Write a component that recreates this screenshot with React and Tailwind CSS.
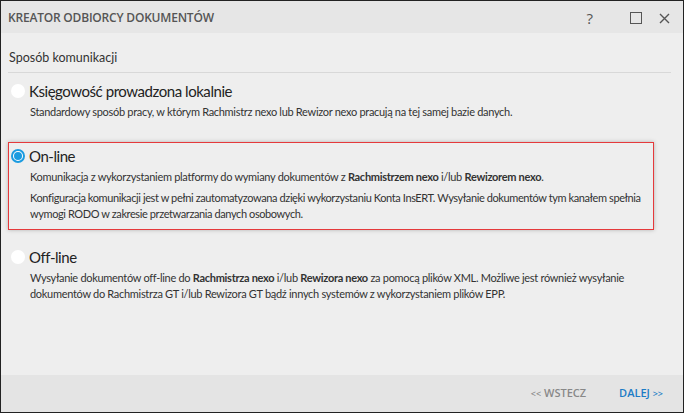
const font = { fontFamily: 'Lato, "Noto Sans", sans-serif' };
const titleFont = { fontFamily: '"Open Sans", "Noto Sans", sans-serif' };

function Radio({ checked }) {
  if (checked) {
    return (
      <span className="w-[14px] h-[14px] rounded-full border-[2px] border-[#1a9be0] bg-white flex items-center justify-center shrink-0">
        <span className="w-[8px] h-[8px] rounded-full bg-[#1a9be0]" />
      </span>
    );
  }
  return <span className="w-[14px] h-[14px] rounded-full bg-white shrink-0" />;
}

function Option({ label, checked, children }) {
  return (
    <div>
      <div className="flex items-center gap-[4px] h-[25px]">
        <Radio checked={checked} />
        <span className="text-[15px] tracking-[-0.45px] text-[#222] leading-none">{label}</span>
      </div>
      <div className="pl-[19px] text-[11px] tracking-[-0.3px] leading-[16px] text-[#333]">{children}</div>
    </div>
  );
}

export default function App() {
  return (
    <div style={font} className="w-[684px] h-[413px] border border-[#222] bg-[#eeeeee] flex flex-col overflow-hidden">
      {/* TITLE BAR */}
      <div className="h-[32px] bg-[#e6e6e6] flex items-center justify-between pl-[7px] pr-[13px] pt-[2px] shrink-0">
        <span style={titleFont} className="text-[12px] font-semibold text-[#555] tracking-[-0.2px]">KREATOR ODBIORCY DOKUMENTÓW</span>
        <div className="flex items-center text-[#555]">
          <span style={titleFont} className="text-[15px] leading-none mr-[37px]">?</span>
          <span className="w-[12px] h-[12px] border-[1.5px] border-[#555] mr-[17px]" />
          <svg width="11" height="11" viewBox="0 0 11 11">
            <path d="M1 1 L10 10 M10 1 L1 10" stroke="#555" strokeWidth="1.4" />
          </svg>
        </div>
      </div>

      {/* CONTENT */}
      <div className="flex-1 px-[7px] pt-[16px]">
        <div className="text-[12.5px] text-[#333] pb-[4px] border-b border-[#d8d8d8] mr-[5px] pl-[1px]">Sposób komunikacji</div>

        <div className="pt-[6px] pl-[3px]">
          <Option label="Księgowość prowadzona lokalnie">
            Standardowy sposób pracy, w którym Rachmistrz nexo lub Rewizor nexo pracują na tej samej bazie danych.
          </Option>
        </div>

        <div className="mt-[22px] mr-[22px] border border-[#e5393b] shadow-[0_0_4px_rgba(0,0,0,0.25)] pl-[2px] pt-[1px] pb-[7px]">
          <Option label="On-line" checked>
            <p>
              Komunikacja z wykorzystaniem platformy do wymiany dokumentów z <b>Rachmistrzem nexo</b> i/lub <b>Rewizorem nexo</b>.
            </p>
            <p className="mt-[5px] tracking-[-0.4px]">
              Konfiguracja komunikacji jest w pełni zautomatyzowana dzięki wykorzystaniu Konta InsERT. Wysyłanie dokumentów tym kanałem spełnia wymogi RODO w zakresie przetwarzania danych osobowych.
            </p>
          </Option>
        </div>

        <div className="pt-[15px] pl-[3px]">
          <Option label="Off-line">
            <p className="pr-[14px]">
              Wysyłanie dokumentów off-line do <b>Rachmistrza nexo</b> i/lub <b>Rewizora nexo</b> za pomocą plików XML. Możliwe jest również wysyłanie dokumentów do Rachmistrza GT i/lub Rewizora GT bądź innych systemów z wykorzystaniem plików EPP.
            </p>
          </Option>
        </div>
      </div>

      {/* FOOTER */}
      <div style={titleFont} className="h-[37px] bg-[#e4e4e4] flex items-center justify-end gap-[33px] pr-[20px] shrink-0">
        <span className="text-[11px] font-semibold text-[#888]">
          <span className="text-[9px]">&lt;&lt;</span> WSTECZ
        </span>
        <span className="text-[11px] font-semibold text-[#1c7cc6]">
          DALEJ <span className="text-[9px]">&gt;&gt;</span>
        </span>
      </div>
    </div>
  );
}
